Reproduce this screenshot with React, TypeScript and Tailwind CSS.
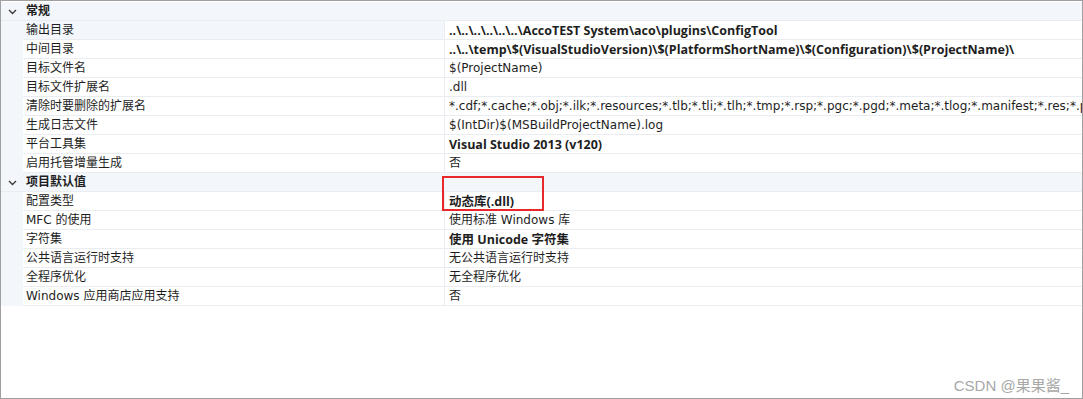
import React from "react";

type Row = { label: string; value: string; bold?: boolean; selected?: boolean };

const general: Row[] = [
  { label: "输出目录", value: "..\\..\\..\\..\\..\\..\\AccoTEST System\\aco\\plugins\\ConfigTool", bold: true, selected: true },
  { label: "中间目录", value: "..\\..\\temp\\$(VisualStudioVersion)\\$(PlatformShortName)\\$(Configuration)\\$(ProjectName)\\", bold: true },
  { label: "目标文件名", value: "$(ProjectName)" },
  { label: "目标文件扩展名", value: ".dll" },
  {
    label: "清除时要删除的扩展名",
    value: "*.cdf;*.cache;*.obj;*.ilk;*.resources;*.tlb;*.tli;*.tlh;*.tmp;*.rsp;*.pgc;*.pgd;*.meta;*.tlog;*.manifest;*.res;*.pch;*.exp",
  },
  { label: "生成日志文件", value: "$(IntDir)$(MSBuildProjectName).log" },
  { label: "平台工具集", value: "Visual Studio 2013 (v120)", bold: true },
  { label: "启用托管增量生成", value: "否" },
];

const defaults: Row[] = [
  { label: "配置类型", value: "动态库(.dll)", bold: true },
  { label: "MFC 的使用", value: "使用标准 Windows 库" },
  { label: "字符集", value: "使用 Unicode 字符集", bold: true },
  { label: "公共语言运行时支持", value: "无公共语言运行时支持" },
  { label: "全程序优化", value: "无全程序优化" },
  { label: "Windows 应用商店应用支持", value: "否" },
];

const boldFont = { fontFamily: '"Open Sans", "Noto Sans CJK SC", sans-serif' };

function Chevron() {
  return (
    <svg width="9" height="6" viewBox="0 0 9 6" fill="none" stroke="#3c3c3c" strokeWidth="1.4">
      <polyline points="1,1 4.5,4.5 8,1" />
    </svg>
  );
}

function GroupHeader({ title }: { title: string }) {
  return (
    <div className="flex h-[19px] items-center border-b border-[#e9ecf0] bg-[#f3f6fb]">
      <div className="flex w-[22px] shrink-0 items-center justify-center pt-px">
        <Chevron />
      </div>
      <span className="pl-[3px] pt-px font-bold text-[#1e1e1e]">{title}</span>
    </div>
  );
}

function PropRow({ row }: { row: Row }) {
  return (
    <div className="flex h-[19px] items-stretch">
      <div className="w-[22px] shrink-0 bg-[#f3f6fb]" />
      <div
        className={`flex w-[422px] shrink-0 items-center border-b border-r border-[#e9ecf0] pl-[3px] pt-px text-[#1e1e1e] ${
          row.selected ? "bg-[#f3f6fb]" : "bg-white"
        }`}
      >
        {row.label}
      </div>
      <div
        className={`flex min-w-0 flex-1 items-center overflow-hidden whitespace-nowrap border-b border-[#e9ecf0] pl-[4px] pt-px text-[#1e1e1e] ${
          row.bold ? "text-[12.5px] font-bold" : ""
        }`}
        style={row.bold ? boldFont : undefined}
      >
        {row.value}
      </div>
    </div>
  );
}

export default function App() {
  return (
    <div
      className="relative h-[399px] w-[1083px] overflow-hidden border border-[#a0a0a0] bg-white pt-px text-[12px] leading-[19px]"
      style={{ fontFamily: '"DejaVu Sans", "Noto Sans CJK SC", sans-serif' }}
    >
      <GroupHeader title="常规" />
      {general.map((r) => (
        <PropRow key={r.label} row={r} />
      ))}
      <GroupHeader title="项目默认值" />
      {defaults.map((r) => (
        <PropRow key={r.label} row={r} />
      ))}

      <div className="pointer-events-none absolute left-[441px] top-[175px] h-[35px] w-[102px] border-2 border-[#e8282b]" />

      <div
        className="absolute bottom-[5px] right-[13px] text-[15px] leading-none text-[#a8a8a8]"
        style={{ fontFamily: '"Liberation Sans", "Noto Sans CJK SC", sans-serif' }}
      >
        CSDN @果果酱_
      </div>
    </div>
  );
}
